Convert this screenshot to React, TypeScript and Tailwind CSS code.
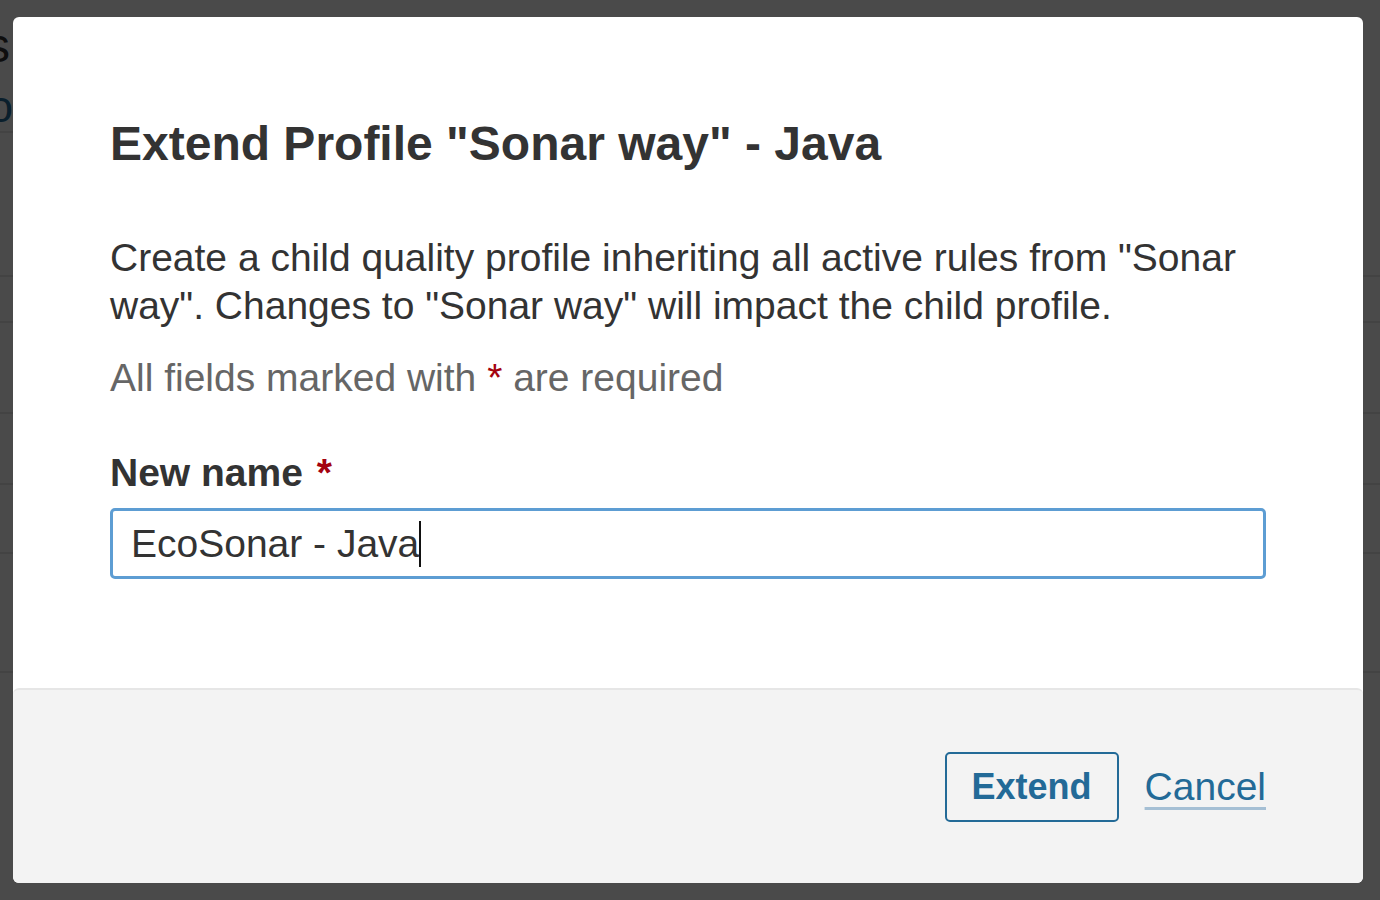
export default function App() {
  return (
    <div className="relative h-[900px] w-[1380px] overflow-hidden bg-white font-['Liberation_Sans',Arial,sans-serif] text-[#333]">
      {/* page behind the modal */}
      <div className="flex flex-col">
        <div className="flex w-[10px] justify-end whitespace-nowrap pt-[18px]">
          <span className="text-[48px] leading-[56px] text-[#333]">Quality Profiles</span>
        </div>
        <div className="flex w-[13px] justify-end whitespace-nowrap pt-[9px]">
          <span className="text-[44px] leading-[48px] text-[#236a97]">Info</span>
        </div>
        <div className="h-[2px] w-[40px] bg-[#e6e6e6]" />
        <div className="h-[144px] border-b-2 border-[#e6e6e6]" />
        <div className="h-[46px] border-b-2 border-[#e6e6e6]" />
        <div className="h-[91px] border-b-2 border-[#e6e6e6]" />
        <div className="h-[71px] border-b-2 border-[#e6e6e6]" />
        <div className="h-[69px] border-b-2 border-[#e6e6e6]" />
        <div className="h-[119px] border-b-2 border-[#e6e6e6]" />
      </div>

      <div className="absolute inset-0 bg-black/[0.71]" />

      <div className="absolute inset-0 flex pl-[13px] pt-[17px]">
        <div className="flex h-[866px] w-[1350px] flex-col rounded-[6px] bg-white">
          <div className="flex flex-1 flex-col px-[97px] pt-[99px]">
            <h2 className="text-[48px] font-bold leading-[56px] text-[#333]">
              Extend Profile "Sonar way" - Java
            </h2>
            <p className="mt-[62px] text-[39px] leading-[48px] text-[#333]">
              Create a child quality profile inheriting all active rules from "Sonar way". Changes to "Sonar way" will
              impact the child profile.
            </p>
            <p className="mt-[24px] text-[39px] leading-[48px] text-[#666]">
              All fields marked with <span className="text-[#a4030f]">*</span> are required
            </p>
            <label className="mt-[47px] text-[39px] font-bold leading-[48px] text-[#333]">
              New name <span className="ml-[3px] text-[#a4030f]">*</span>
            </label>
            <div className="mt-[11px] flex h-[71px] items-center rounded-[5px] border-[3px] border-[#5d9dd3] px-[18px]">
              <span className="text-[39px] leading-[48px] text-[#333]">EcoSonar - Java</span>
              <span className="h-[46px] w-[2px] bg-[#111]" />
            </div>
          </div>
          <div className="flex h-[195px] items-center justify-end gap-[26px] rounded-[6px] border-t-2 border-[#e6e6e6] bg-[#f3f3f3] px-[97px]">
            <button className="h-[70px] rounded-[5px] border-2 border-[#236a97] px-[25px] text-[36px] font-bold leading-[48px] text-[#236a97]">
              Extend
            </button>
            <a className="text-[39px] leading-[48px] text-[#236a97] underline decoration-[#a5bfd4] decoration-[3px] underline-offset-[7px]">
              Cancel
            </a>
          </div>
        </div>
      </div>
    </div>
  );
}
